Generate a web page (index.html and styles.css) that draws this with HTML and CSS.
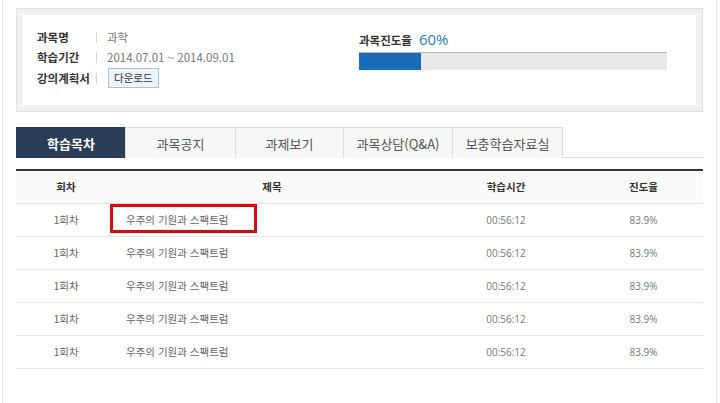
FILE: index.html
```html
<!DOCTYPE html>
<html lang="ko">
<head>
<meta charset="utf-8">
<title>학습목차</title>
<link rel="stylesheet" href="styles.css">
</head>
<body>
<div class="page">
  <div class="info">
    <div class="info-inner">
      <div class="meta">
        <div class="meta-row"><span class="label">과목명</span><span class="sep"></span><span class="value">과학</span></div>
        <div class="meta-row"><span class="label">학습기간</span><span class="sep"></span><span class="value">2014.07.01 ~ 2014.09.01</span></div>
        <div class="meta-row dl"><span class="label">강의계획서</span><span class="sep"></span><span class="btn">다운로드</span></div>
      </div>
      <div class="progress">
        <div class="progress-head"><span class="plabel">과목진도율</span><span class="pvalue">60%</span></div>
        <div class="bar"><div class="fill" style="width:20%"></div></div>
      </div>
    </div>
  </div>

  <div class="tabs">
    <div class="tab active t1">학습목차</div>
    <div class="tab t2">과목공지</div>
    <div class="tab t3">과제보기</div>
    <div class="tab t4">과목상담(Q&amp;A)</div>
    <div class="tab t5">보충학습자료실</div>
  </div>

  <table class="list">
    <colgroup><col class="c1"><col class="c2"><col class="c3"><col class="c4"></colgroup>
    <thead>
      <tr><th>회차</th><th>제목</th><th>학습시간</th><th>진도율</th></tr>
    </thead>
    <tbody>
      <tr><td>1회차</td><td class="title"><span class="mark"></span>우주의 기원과 스팩트럼</td><td class="num">00:56:12</td><td class="num">83.9%</td></tr>
      <tr><td>1회차</td><td class="title">우주의 기원과 스팩트럼</td><td class="num">00:56:12</td><td class="num">83.9%</td></tr>
      <tr><td>1회차</td><td class="title">우주의 기원과 스팩트럼</td><td class="num">00:56:12</td><td class="num">83.9%</td></tr>
      <tr><td>1회차</td><td class="title">우주의 기원과 스팩트럼</td><td class="num">00:56:12</td><td class="num">83.9%</td></tr>
      <tr><td>1회차</td><td class="title">우주의 기원과 스팩트럼</td><td class="num">00:56:12</td><td class="num">83.9%</td></tr>
    </tbody>
  </table>
</div>
</body>
</html>
```

FILE: styles.css
```css
* { box-sizing: border-box; }
html, body { margin: 0; padding: 0; background: #fff; }
body {
  font-family: "Noto Sans CJK KR", "Noto Sans", sans-serif;
  font-size: 11px;
  color: #666;
}
.page {
  margin-left: 2px;
  width: 715px;
  height: 403px;
  border-left: 1px solid #e4e4e4;
  border-right: 1px solid #e4e4e4;
  padding: 8px 12px 0 13px;
}
.info {
  border: 1px solid #e0e0e0;
  background: #f1f1f1;
  padding: 6px;
  width: 687px;
}
.info-inner {
  background: #fff;
  height: 90px;
  display: flex;
  padding: 0 14px;
}
.meta {
  width: 322px;
  padding-top: 12px;
}
.meta-row {
  display: flex;
  align-items: center;
  height: 20px;
}
.meta-row.dl { height: 22px; }
.label {
  width: 59px;
  font-size: 11.5px;
  font-weight: bold;
  color: #333;
  white-space: nowrap;
}
.sep {
  width: 1px;
  height: 11px;
  background: #d6d6d6;
  margin-right: 10px;
}
.value {
  font-family: "Noto Sans CJK KR", sans-serif;
  font-size: 11.5px;
  color: #777;
}
.btn {
  display: inline-block;
  height: 20px;
  line-height: 18px;
  padding: 0 5px;
  border: 1px solid #a9c3de;
  background: #eef4fb;
  color: #333;
  font-size: 10.5px;
  margin-left: 1px;
}
.progress {
  width: 308px;
  padding-top: 14px;
}
.progress-head {
  display: flex;
  align-items: baseline;
  height: 20px;
  line-height: 20px;
}
.plabel {
  font-size: 11.5px;
  font-weight: bold;
  color: #333;
}
.pvalue {
  font-family: "Open Sans", "Noto Sans", sans-serif;
  font-size: 15px;
  color: #2a79c6;
  margin-left: 7px;
}
.bar {
  margin-top: 3px;
  height: 18px;
  background: #e8e8e8;
  border-top: 1px solid #b3b3b3;
  display: flex;
}
.fill {
  background: #1a6cb9;
  height: 100%;
}
.tabs {
  display: flex;
  margin-top: 15px;
  width: 687px;
  border-bottom: 1px solid #dcdcdc;
  height: 31px;
}
.tab {
  height: 31px;
  border: 1px solid #dcdcdc;
  border-bottom: none;
  margin-right: -1px;
  background: #f7f7f7;
  color: #555;
  font-size: 13px;
  display: flex;
  align-items: center;
  justify-content: center;
}
.tab.active {
  background: #2b3d56;
  border-color: #2b3d56;
  color: #fff;
  font-weight: bold;
}
.t1 { width: 110px; }
.t2 { width: 111px; }
.t3 { width: 109px; }
.t4 { width: 110px; }
.t5 { width: 111px; }
.list {
  margin-top: 11px;
  width: 687px;
  border-collapse: collapse;
  table-layout: fixed;
  border-top: 2px solid #333;
}
.c1 { width: 100px; }
.c2 { width: 312px; }
.c3 { width: 156px; }
.c4 { width: 119px; }
.list th {
  height: 33px;
  background: #fafafa;
  font-weight: bold;
  color: #333;
  font-size: 10.5px;
  border-bottom: 1px solid #e2e2e2;
  text-align: center;
  padding: 0;
}
.list td {
  height: 33px;
  text-align: center;
  border-bottom: 1px solid #e6e6e6;
  color: #666;
  font-size: 10.5px;
  padding: 0;
}
.list td.num {
  font-family: "Open Sans", "Noto Sans", sans-serif;
  font-size: 10px;
  color: #777;
}
.list td.title {
  text-align: left;
  padding-left: 10px;
  position: relative;
}
.mark {
  position: absolute;
  left: -6px;
  top: 0;
  width: 147px;
  height: 29px;
  border: 3px solid #e8000b;
}
```
